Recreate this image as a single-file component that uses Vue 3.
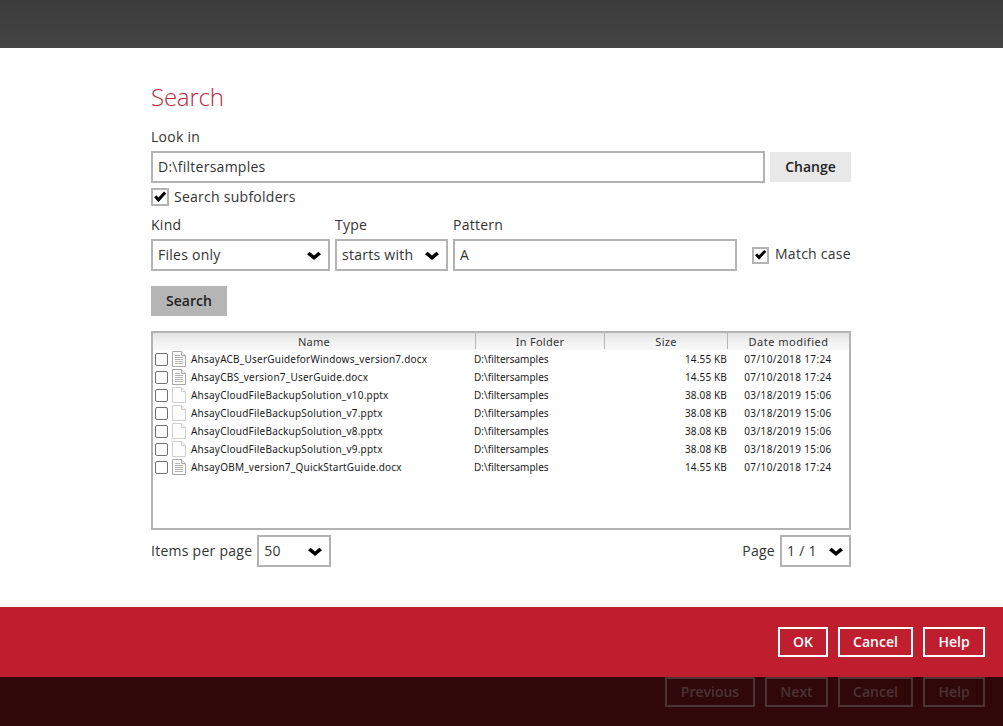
<script setup>
const rows = [
  { name: 'AhsayACB_UserGuideforWindows_version7.docx', size: '14.55 KB', date: '07/10/2018 17:24', lines: true },
  { name: 'AhsayCBS_version7_UserGuide.docx', size: '14.55 KB', date: '07/10/2018 17:24', lines: true },
  { name: 'AhsayCloudFileBackupSolution_v10.pptx', size: '38.08 KB', date: '03/18/2019 15:06', lines: false },
  { name: 'AhsayCloudFileBackupSolution_v7.pptx', size: '38.08 KB', date: '03/18/2019 15:06', lines: false },
  { name: 'AhsayCloudFileBackupSolution_v8.pptx', size: '38.08 KB', date: '03/18/2019 15:06', lines: false },
  { name: 'AhsayCloudFileBackupSolution_v9.pptx', size: '38.08 KB', date: '03/18/2019 15:06', lines: false },
  { name: 'AhsayOBM_version7_QuickStartGuide.docx', size: '14.55 KB', date: '07/10/2018 17:24', lines: true },
]
const chev = 'M0 3.2 2.6 .8 7 4.6 11.4 .8 14 3.2 7 9Z'
const tick = 'M1.2 6.2 3.4 4.2 5.4 6.4 11 .6 13.2 2.6 5.4 11.2Z'
</script>

<template>
  <div class="page">
    <header class="top"></header>
    <main class="main">
      <h1 class="title">Search</h1>
      <div class="label look">Look in</div>
      <div class="line">
        <div class="field grow">D:\filtersamples</div>
        <button class="change">Change</button>
      </div>
      <label class="check sub">
        <span class="box"><svg width="14" height="12" viewBox="0 0 14 12"><path :d="tick" fill="#000"/></svg></span>
        <span class="cap">Search subfolders</span>
      </label>
      <div class="filters">
        <div class="col kind">
          <div class="label">Kind</div>
          <div class="field select">Files only<svg class="chev" width="14" height="9" viewBox="0 0 14 9"><path :d="chev" fill="#000"/></svg></div>
        </div>
        <div class="col type">
          <div class="label">Type</div>
          <div class="field select">starts with<svg class="chev" width="14" height="9" viewBox="0 0 14 9"><path :d="chev" fill="#000"/></svg></div>
        </div>
        <div class="col pattern">
          <div class="label">Pattern</div>
          <div class="field">A</div>
        </div>
        <label class="check match">
          <span class="box"><svg width="14" height="12" viewBox="0 0 14 12"><path :d="tick" fill="#000"/></svg></span>
          <span class="cap">Match case</span>
        </label>
      </div>
      <button class="search">Search</button>
      <div class="list">
        <div class="head">
          <span>Name</span><span>In Folder</span><span>Size</span><span>Date modified</span>
        </div>
        <div v-for="r in rows" :key="r.name" class="row">
          <span class="namecell">
            <span class="cb"></span>
            <svg class="doc" width="14" height="16" viewBox="0 0 14 16">
              <path d="M.5.5H9.5L13.5 4.5V15.5H.5Z" fill="#fdfdfd" :stroke="r.lines ? '#a8a8a8' : '#cfcfcf'"/>
              <path d="M9.5 .5V4.5H13.5" fill="#f0f0f0" :stroke="r.lines ? '#a8a8a8' : '#cfcfcf'"/>
              <path v-if="r.lines" d="M3 4.5H8M3 6.5H11M3 8.5H11M3 10.5H11M3 12.5H11" stroke="#b4b4b4"/>
            </svg>
            <span class="fname">{{ r.name }}</span>
          </span>
          <span class="folder">D:\filtersamples</span>
          <span class="size">{{ r.size }}</span>
          <span class="date">{{ r.date }}</span>
        </div>
      </div>
      <div class="pager">
        <div class="pg">
          <span class="pgt">Items per page</span>
          <div class="field select per">50<svg class="chev" width="14" height="9" viewBox="0 0 14 9"><path :d="chev" fill="#000"/></svg></div>
        </div>
        <div class="pg">
          <span class="pgt">Page</span>
          <div class="field select pnum">1 / 1<svg class="chev" width="14" height="9" viewBox="0 0 14 9"><path :d="chev" fill="#000"/></svg></div>
        </div>
      </div>
    </main>
    <section class="red">
      <button class="btn w-ok">OK</button>
      <button class="btn w-cancel">Cancel</button>
      <button class="btn w-help">Help</button>
    </section>
    <footer class="dark">
      <button class="btn off w-prev">Previous</button>
      <button class="btn off w-ok2">Next</button>
      <button class="btn off w-cancel">Cancel</button>
      <button class="btn off w-help">Help</button>
    </footer>
  </div>
</template>

<style>
html, body { margin: 0; background: #fff; }
</style>

<style scoped>
.page {
  width: 1003px;
  height: 726px;
  display: flex;
  flex-direction: column;
  overflow: hidden;
  font-family: "Open Sans", "Noto Sans", sans-serif;
  font-size: 14px;
  letter-spacing: .26px;
  color: #333;
}
.top { height: 48px; flex: none; background: linear-gradient(#3c3c3c, #444); }
.main { flex: 1; padding: 0 152px 0 151px; background: #fff; }
.title {
  margin: 31px 0 0;
  font-size: 24px;
  line-height: 36px;
  font-weight: 300;
  letter-spacing: -.2px;
  color: #b8293c;
}
.label { line-height: 20px; }
.look { margin-top: 12px; }
.line { display: flex; gap: 5px; margin-top: 4px; align-items: center; }
.grow { flex: 1; }
.field {
  box-sizing: border-box;
  height: 32px;
  border: 2px solid #b3b3b3;
  padding: 0 5px 2px;
  display: flex;
  align-items: center;
  background: #fff;
}
.change {
  width: 81px;
  height: 30px;
  border: 0;
  background: #e8e8e8;
  font: 600 14px "Open Sans", sans-serif;
  color: #222;
  padding: 0 0 1px;
}
.check { display: flex; align-items: center; gap: 5px; line-height: 16px; }
.box {
  box-sizing: border-box;
  width: 18px;
  height: 18px;
  border: 2px solid #b3b3b3;
  display: flex;
  align-items: center;
  justify-content: center;
  flex: none;
}
.cap { margin-bottom: 2px; }
.sub { margin-top: 5px; height: 18px; }
.sub .cap { margin-bottom: 0; }
.filters { display: flex; margin-top: 9px; gap: 5px; align-items: flex-end; }
.col { display: flex; flex-direction: column; gap: 4px; }
.kind { width: 179px; }
.type { width: 113px; }
.pattern { width: 284px; }
.select { justify-content: space-between; padding-right: 7px; }
.chev { flex: none; margin-top: 2px; }
.match { margin-left: 10px; height: 32px; white-space: nowrap; gap: 6px; }
.match .box { width: 17px; height: 17px; }
.search {
  display: block;
  margin-top: 15px;
  width: 76px;
  height: 30px;
  border: 0;
  padding: 0 0 2px;
  background: #b5b5b5;
  font: 600 14px "Open Sans", sans-serif;
  color: #222;
}
.list {
  box-sizing: border-box;
  margin-top: 15px;
  height: 199px;
  border: 2px solid #b3b3b3;
  background: #fff;
}
.head, .row {
  display: grid;
  grid-template-columns: 323px 129px 123px 121px;
}
.head {
  height: 17px;
  line-height: 17px;
  font-family: "Noto Sans", sans-serif;
  font-size: 11px;
  color: #333;
  text-align: center;
  background: linear-gradient(#e2e2e2, #f2f2f2 55%, #f8f8f8);
}
.head span { border-right: 1px solid #b5b5b5; height: 16px; }
.head span:last-child { border-right: 0; letter-spacing: .5px; }
.row {
  height: 18px;
  line-height: 18px;
  font-family: "Noto Sans", sans-serif;
  font-size: 10px;
  letter-spacing: 0;
  color: #1a1a1a;
  white-space: nowrap;
}
.namecell { display: flex; align-items: center; padding-left: 2px; }
.fname { letter-spacing: .22px; }
.cb {
  box-sizing: border-box;
  width: 13px;
  height: 13px;
  border: 1px solid #707070;
  border-radius: 2px;
  flex: none;
}
.doc { margin: 0 5px 0 4px; flex: none; }
.folder { margin-left: -2px; }
.size { text-align: right; padding-right: 1px; letter-spacing: .15px; }
.date { text-align: center; letter-spacing: .38px; margin-left: -1px; }
.pager { display: flex; justify-content: space-between; margin-top: 5px; }
.pg { display: flex; align-items: center; gap: 5px; }
.pgt { padding-bottom: 2px; }
.per { width: 74px; }
.pnum { width: 71px; padding-right: 6px; }
.red, .dark {
  flex: none;
  display: flex;
  justify-content: flex-end;
  gap: 10px;
  padding-right: 18px;
  box-sizing: border-box;
}
.red { height: 70px; background: #bf1e2e; padding-top: 20px; }
.dark { height: 49px; background: #300809; }
.btn {
  box-sizing: border-box;
  height: 30px;
  padding: 0 0 2px;
  border: 2px solid #fff;
  background: transparent;
  color: #fff;
  font: 600 14px "Open Sans", sans-serif;
}
.off { border-color: #4d3333; color: #4d3333; }
.w-ok { width: 50px; }
.w-ok2 { width: 63px; }
.w-prev { width: 90px; }
.w-cancel { width: 75px; }
.w-help { width: 62px; }
</style>
